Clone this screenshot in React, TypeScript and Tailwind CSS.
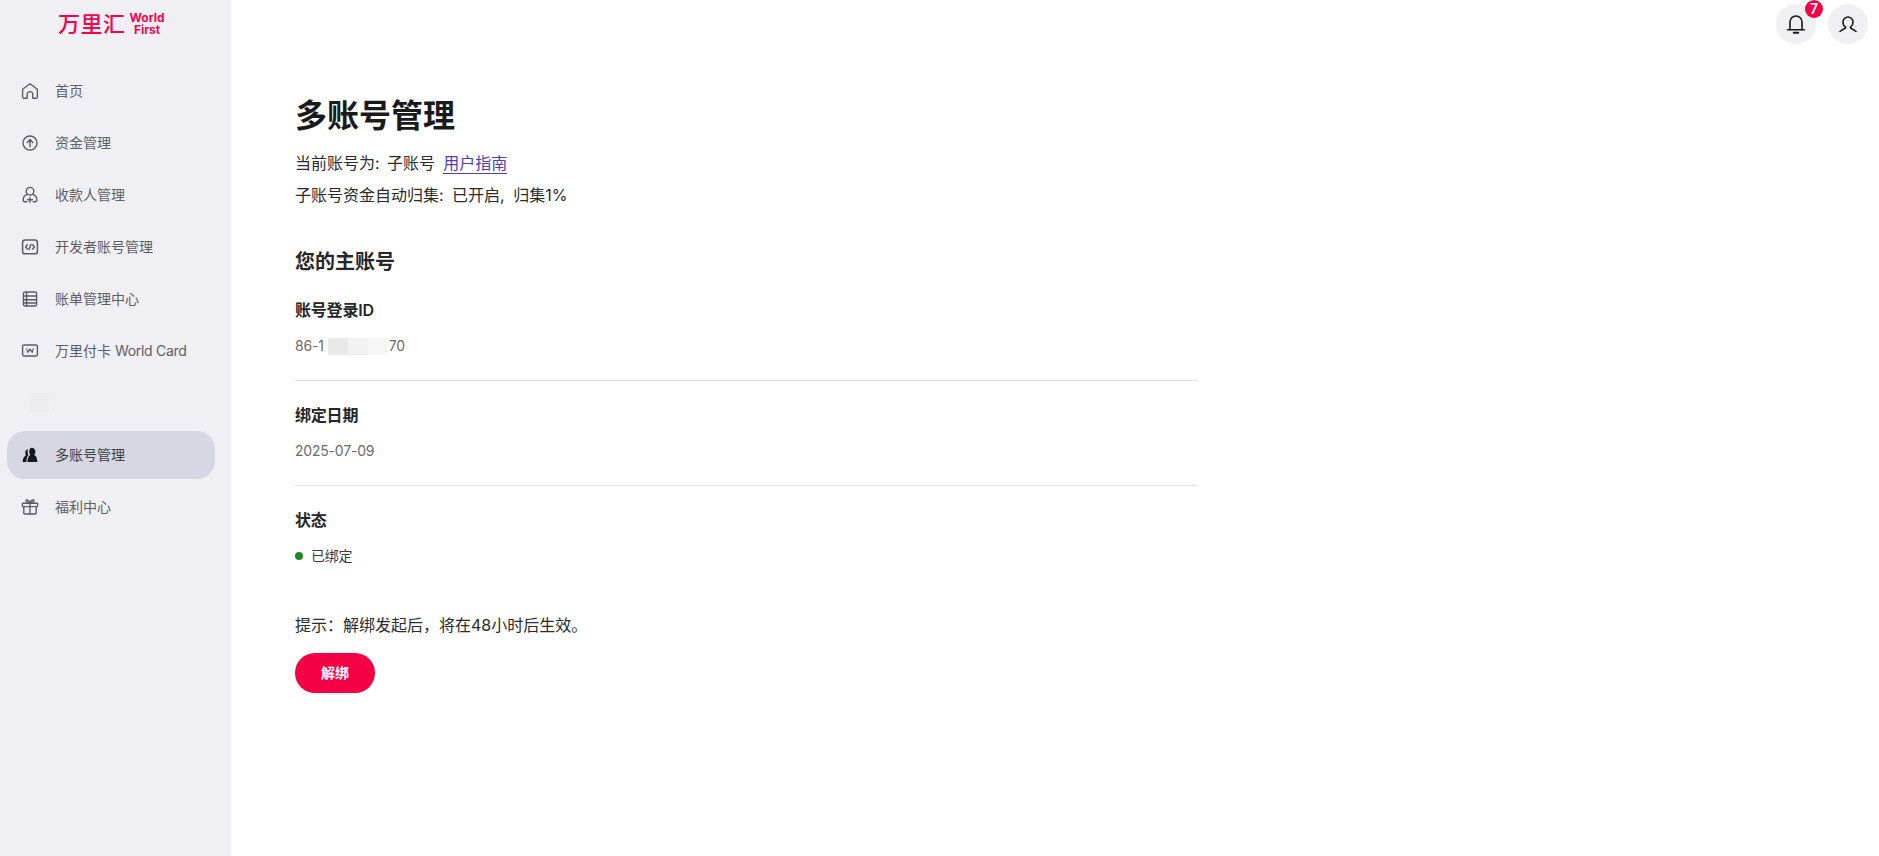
import { ReactNode } from "react";

const iconClass = "w-5 h-5 text-[#5c5c63]";

function HomeIcon() {
  return (
    <svg viewBox="0 0 20 20" fill="none" stroke="currentColor" strokeWidth="1.4" className={iconClass}>
      <path d="M2.600 8.200 10 2.800l7.400 5.400V16a1.200 1.200 0 0 1-1.200 1.200h-3.400v-3.800a2.800 2.800 0 0 0-5.600 0v3.800H3.800A1.200 1.200 0 0 1 2.600 16V8.200Z" strokeLinejoin="round" />
    </svg>
  );
}

function UpCircleIcon() {
  return (
    <svg viewBox="0 0 20 20" fill="none" stroke="currentColor" strokeWidth="1.4" className={iconClass}>
      <circle cx="10" cy="10" r="7" />
      <path d="M10 13.800V6.800M7.200 9.400 10 6.600l2.800 2.800" strokeLinecap="round" strokeLinejoin="round" />
    </svg>
  );
}

function PayeeIcon() {
  return (
    <svg viewBox="0 0 20 20" fill="none" stroke="currentColor" strokeWidth="1.4" className={iconClass}>
      <circle cx="10" cy="6.200" r="3.800" />
      <path d="M7.200 9.400C4.800 10.200 3.200 12 3.200 14.400c0 1.400.7 2.400 2 2.400h1.600M12.800 9.400c2.400.8 4 2.600 4 5 0 1.400-.7 2.400-2 2.400h-1.600" strokeLinecap="round" />
      <path d="M10 12.400v4.800M7.600 14.800h4.800" strokeLinecap="round" />
    </svg>
  );
}

function DevIcon() {
  return (
    <svg viewBox="0 0 20 20" fill="none" stroke="currentColor" strokeWidth="1.5" className={iconClass}>
      <rect x="2.600" y="3" width="14.800" height="13.800" rx="2.400" />
      <path d="M7.400 7.800 5.600 9.900l1.800 2.100M12.600 7.800l1.800 2.100-1.800 2.100M10.900 7.400 9.100 12.400" strokeLinecap="round" strokeLinejoin="round" />
    </svg>
  );
}

function BillIcon() {
  return (
    <svg viewBox="0 0 20 20" fill="none" stroke="currentColor" strokeWidth="1.4" className={iconClass}>
      <rect x="3.400" y="3" width="13.200" height="14" rx="1.400" />
      <path d="M3.400 7h13.200M3.400 10.800h13.200M3.400 14h13.200M6.600 3v14" />
    </svg>
  );
}

function CardIcon() {
  return (
    <svg viewBox="0 0 20 20" fill="none" stroke="currentColor" strokeWidth="1.4" className={iconClass}>
      <rect x="2.600" y="4" width="14.800" height="11" rx="1.600" />
      <path d="m6.600 7.400 1.200 4 2.200-3.400 2.200 3.400 1.200-4" strokeWidth="1.200" strokeLinejoin="round" />
    </svg>
  );
}

function AccountsIcon() {
  return (
    <svg viewBox="0 0 20 20" className="w-5 h-5 text-[#18181b]" fill="currentColor">
      <path d="M11.600 2.800c2.300 0 3.800 1.800 3.800 4 0 1.300-.5 2.400-1.200 3.200 1.900.8 3 2.700 3.200 7H7.400c.2-4.300 1.200-6.200 3-7-.7-.8-1.200-1.900-1.200-3.200 0-1.800 1-4 2.400-4Z" />
      <path d="M7.800 4C6 4.900 5.200 6.200 5.200 7.600c0 1 .3 1.900.8 2.600-1.800.9-3.200 2.800-3.400 6.800h3.800c.1-3.200.7-5.600 2-7-.8-1.600-1-3.900-.6-6Z" />
    </svg>
  );
}

function GiftIcon() {
  return (
    <svg viewBox="0 0 20 20" fill="none" stroke="currentColor" strokeWidth="1.4" className={iconClass}>
      <rect x="2.400" y="6.200" width="15.200" height="3.400" rx="0.600" />
      <path d="M3.800 9.600v6.400a1 1 0 0 0 1 1h10.400a1 1 0 0 0 1-1V9.600M10 6.200v10.800" />
      <path d="M10 6C9 3.600 7.800 2.800 6.800 3 5.400 3.300 5.600 6 10 6ZM10 6c1-2.400 2.200-3.200 3.200-3 1.400.3 1.200 3-3.200 3Z" strokeLinejoin="round" />
    </svg>
  );
}

function NavItem({ icon, label, active }: { icon: ReactNode; label: ReactNode; active?: boolean }) {
  return (
    <div
      className={`h-12 flex items-center gap-[15px] pl-[13px] rounded-[18px] text-sm ${
        active ? "bg-[#d7d7e4] text-[#3f3f46]" : "text-[#5f5f66]"
      }`}
    >
      {icon}
      <span>{label}</span>
    </div>
  );
}

function Field({ label, children, divider }: { label: string; children: ReactNode; divider?: boolean }) {
  return (
    <div className={divider ? "border-b border-[#e2e2e2] h-[105px]" : "h-[105px]"}>
      <div className="text-base leading-6 font-semibold text-[#262626] pt-[22px] h-[46px] tracking-[-0.2px]">{label}</div>
      <div className="text-sm leading-5 mt-[14px] tracking-[-0.2px]">{children}</div>
    </div>
  );
}

export default function App() {
  return (
    <div
      className="flex h-[856px] w-full overflow-hidden bg-white"
      style={{ fontFamily: "Inter, 'Noto Sans CJK SC', sans-serif" }}
    >
      <aside className="w-[231px] shrink-0 bg-[#efeff4] pl-[7px] pr-[16px]">
        <div className="h-[67px] pt-[12px] pl-[51px]">
          <div className="flex items-center gap-1 text-[#f4044c]">
            <span className="text-[22px] leading-[24px] tracking-[0.5px] font-medium">万里汇</span>
            <span className="text-[12px] leading-[12px] font-bold text-center">
              World
              <br />
              First
            </span>
          </div>
        </div>
        <nav className="flex flex-col gap-1">
          <NavItem icon={<HomeIcon />} label="首页" />
          <NavItem icon={<UpCircleIcon />} label="资金管理" />
          <NavItem icon={<PayeeIcon />} label="收款人管理" />
          <NavItem icon={<DevIcon />} label="开发者账号管理" />
          <NavItem icon={<BillIcon />} label="账单管理中心" />
          <NavItem
            icon={<CardIcon />}
            label={
              <>
                万里付卡 <span className="tracking-[-0.3px]">World Card</span>
              </>
            }
          />
          <div className="h-12 flex items-center pl-[22px]">
            <div className="w-5 h-5 bg-[#ebebf0]" />
          </div>
          <NavItem icon={<AccountsIcon />} label="多账号管理" active />
          <NavItem icon={<GiftIcon />} label="福利中心" />
        </nav>
      </aside>

      <main className="flex-1 min-w-0">
        <header className="flex justify-end gap-3 pt-1 pr-[11px] h-[44px]">
          <div className="relative w-10 h-10 rounded-full bg-[#f0f0f3] flex items-center justify-center">
            <svg viewBox="0 0 24 24" fill="none" stroke="#18181b" strokeWidth="1.600" className="w-6 h-6">
              <path d="M6 17.500V10a6 6 0 0 1 12 0v7.500M3.600 17.800h16.800" strokeLinecap="round" />
              <path d="M9.800 20.800h4.400" strokeLinecap="round" strokeWidth="2" />
            </svg>
            <span className="absolute -top-[4px] -right-[7px] w-[18px] h-[18px] rounded-full bg-[#f40044] text-white text-sm font-semibold leading-[18px] text-center">
              7
            </span>
          </div>
          <div className="w-10 h-10 rounded-full bg-[#f0f0f3] flex items-center justify-center">
            <svg viewBox="0 0 24 24" fill="none" stroke="#18181b" strokeWidth="1.600" className="w-6 h-6">
              <path d="M9.400 15C7.600 13.800 7 12 7 10a5 5 0 0 1 10 0c0 2-.6 3.800-2.400 5v1l5.400 3.400M9.400 15v1L4 19.400" strokeLinecap="round" strokeLinejoin="round" />
            </svg>
          </div>
        </header>

        <div className="w-[903px] ml-[64px]">
          <h1 className="text-[32px] leading-10 font-bold text-[#1a1a1a] mt-[52px]">多账号管理</h1>
          <p className="text-base leading-6 text-[#2b2b2b] mt-[15px] [word-spacing:3px]">
            当前账号为: 子账号
            <a className="ml-2 text-[#4b3fb5] border-b border-[#4b3fb5]">用户指南</a>
          </p>
          <p className="text-base leading-6 text-[#2b2b2b] mt-2 [word-spacing:4px]">子账号资金自动归集: 已开启, 归集1%</p>
          <h2 className="text-xl leading-7 font-semibold text-[#262626] mt-[41px]">您的主账号</h2>

          <div>
            <Field label="账号登录ID" divider>
              <span className="flex items-center text-[#6b6b6b]">
                <span>86-1</span>
                <span className="flex h-[17px] ml-1 mr-px">
                  <span className="w-5 bg-[#e8e8e8]" />
                  <span className="w-5 bg-[#f1f1f1]" />
                  <span className="w-5 bg-[#f6f6f6]" />
                </span>
                <span>70</span>
              </span>
            </Field>
            <Field label="绑定日期" divider>
              <span className="text-[#6b6b6b]">2025-07-09</span>
            </Field>
            <Field label="状态">
              <span className="flex items-center gap-2 text-[#3a3a3a]">
                <span className="w-2 h-2 rounded-full bg-[#1f8a24]" />
                已绑定
              </span>
            </Field>
          </div>

          <p className="text-base leading-6 text-[#2b2b2b] mt-[22px]">提示：解绑发起后，将在48小时后生效。</p>
          <button className="block mt-4 w-20 h-10 rounded-full bg-[#f40044] text-white text-sm font-bold">解绑</button>
        </div>
      </main>
    </div>
  );
}
